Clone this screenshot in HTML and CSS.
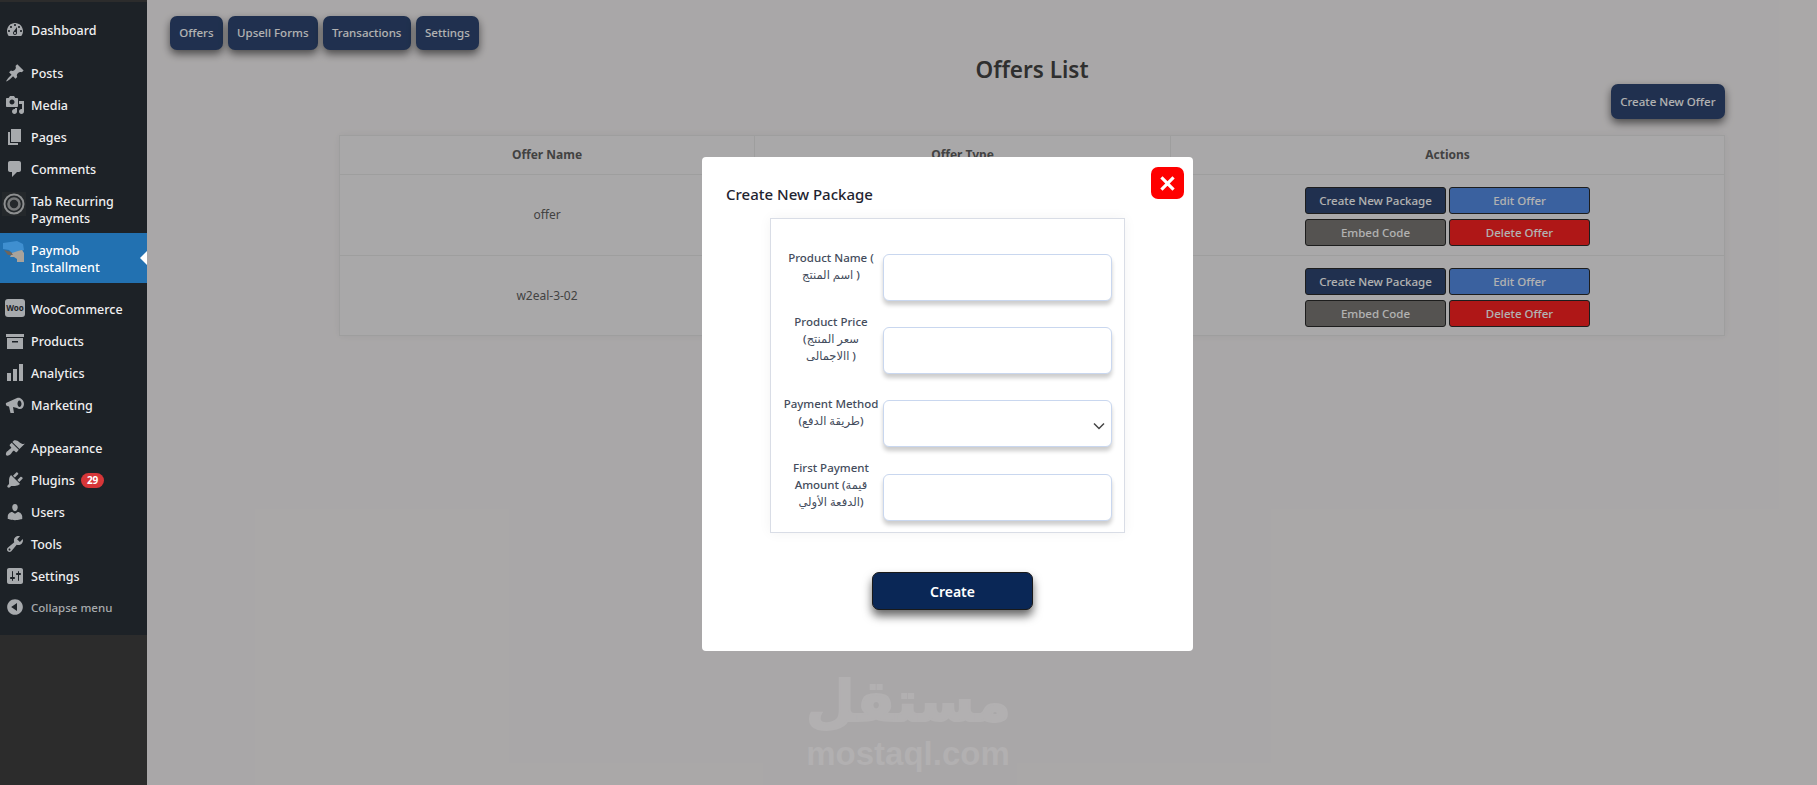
FILE: index.html
```html
<!DOCTYPE html>
<html lang="en">
<head>
  <meta charset="UTF-8">
  <title>Offers List</title>
  <link rel="stylesheet" href="styles.css">
</head>
<body>

  <nav class="sidebar">
    <ul class="menu">
      <li class="item gap-after"><svg class="icon" viewBox="0 0 20 20"><path d="M3.76 16h12.48c1.1-1.37 1.76-3.11 1.76-5 0-4.42-3.58-8-8-8s-8 3.58-8 8c0 1.89.66 3.63 1.76 5zM10 4c.55 0 1 .45 1 1s-.45 1-1 1-1-.45-1-1 .45-1 1-1zM6 6c.55 0 1 .45 1 1s-.45 1-1 1-1-.45-1-1 .45-1 1-1zm8 0c.55 0 1 .45 1 1s-.45 1-1 1-1-.45-1-1 .45-1 1-1zm-5.37 5.55L12 7v6c0 1.1-.9 2-2 2s-2-.9-2-2c0-.57.24-1.08.63-1.45zM4 10c.55 0 1 .45 1 1s-.45 1-1 1-1-.45-1-1 .45-1 1-1zm12 0c.55 0 1 .45 1 1s-.45 1-1 1-1-.45-1-1 .45-1 1-1zm-5 3c0-.55-.45-1-1-1s-1 .45-1 1 .45 1 1 1 1-.45 1-1z"/></svg><span>Dashboard</span></li>
      <li class="item"><svg class="icon" viewBox="0 0 20 20"><path d="M10.44 3.02l1.82-1.82 6.36 6.35-1.83 1.82c-1.05-.68-2.48-.57-3.41.36l-.75.75c-.92.93-1.04 2.35-.35 3.41l-1.83 1.82-2.41-2.41-2.8 2.79c-.42.42-3.38 2.71-3.8 2.29s1.86-3.39 2.28-3.81l2.79-2.79L4.1 9.36l1.83-1.82c1.05.69 2.48.57 3.4-.36l.75-.75c.93-.92 1.05-2.35.36-3.41z"/></svg><span>Posts</span></li>
      <li class="item"><svg class="icon" viewBox="0 0 20 20"><path d="M13 11V4c0-.55-.45-1-1-1h-1.67L9 1H5L3.67 3H2c-.55 0-1 .45-1 1v7c0 .55.45 1 1 1h10c.55 0 1-.45 1-1zM7 4.5c1.38 0 2.5 1.12 2.5 2.5S8.38 9.5 7 9.5 4.5 8.38 4.5 7 5.62 4.5 7 4.5zM14 6h5v10.5c0 1.38-1.12 2.5-2.5 2.5S14 17.88 14 16.5s1.12-2.5 2.5-2.5c.17 0 .34.02.5.05V9h-3V6zm-4 8.05V13h2v3.5c0 1.38-1.12 2.5-2.5 2.5S7 17.88 7 16.5 8.12 14 9.5 14c.17 0 .34.02.5.05z"/></svg><span>Media</span></li>
      <li class="item"><svg class="icon" viewBox="0 0 20 20"><path d="M6 15V2h10v13H6zm-1 1h8v2H3V5h2v11z"/></svg><span>Pages</span></li>
      <li class="item"><svg class="icon" viewBox="0 0 20 20"><path d="M5 2h9c1.1 0 2 .9 2 2v7c0 1.1-.9 2-2 2h-2l-5 5v-5H5c-1.1 0-2-.9-2-2V4c0-1.1.9-2 2-2z"/></svg><span>Comments</span></li>
      <li class="item tall"><svg class="icon icon-ring" viewBox="0 0 24 24"><rect width="24" height="24" fill="#24282b"/><circle cx="12" cy="12" r="9.5" fill="none" stroke="#8d8f90" stroke-width="2"/><circle cx="12" cy="12" r="5.5" fill="none" stroke="#77797a" stroke-width="2.6"/></svg><span>Tab Recurring Payments</span></li>
      <li class="item tall active gap-after-short"><svg class="icon icon-card" viewBox="0 0 22 22"><path fill="#3f8fd0" d="M0 2l14-2 6 3 1 6-5 2-6 2-4-4-6-1z"/><path fill="#a9a39b" d="M9 12l6-2 4-1 2 3v9h-7v-3l-3-2-4 0z"/><path fill="#6f655b" d="M1 9l7 2 2 3-5 0z"/></svg><span>Paymob Installment</span></li>
      <li class="item"><span class="icon woo-icon">Woo</span><span>WooCommerce</span></li>
      <li class="item"><svg class="icon" viewBox="0 0 20 20"><path d="M1 3h18v3H1V3zm1 4h16v11H2V7zm5 3v1.5h6V10H7z"/></svg><span>Products</span></li>
      <li class="item"><svg class="icon" viewBox="0 0 20 20"><path d="M2 10h4v8H2v-8zm6-4h4v12H8V6zm6-5h4v17h-4V1z"/></svg><span>Analytics</span></li>
      <li class="item gap-after"><svg class="icon" viewBox="0 0 20 20"><path d="M1 8l11-5c1-.5 2-.5 3 0 2 1 4 3 4 6s-2 5-4 5c-1 .2-2 0-3-1L8 12l1 6H5.500L4 11.500 2 11c-1-.5-1.500-2.200-1-3zm13.500-2.500C13 5.500 12.500 7.500 12.500 9s1 3 2 3 2-1.500 2-3-1-3.500-2-3.500z"/></svg><span>Marketing</span></li>
      <li class="item"><svg class="icon" viewBox="0 0 20 20"><path d="M14.48 11.06L7.41 3.99l1.5-1.5c.5-.56 2.3-.47 3.51.32 1.21.8 1.43 1.28 2.91 2.1 1.18.64 2.45 1.26 4.45.85zm-.71.71L6.7 4.7 4.93 6.47c-.39.39-.39 1.02 0 1.41l1.06 1.06c.39.39.39 1.03 0 1.42-.6.6-1.43 1.11-2.21 1.69-.35.26-.7.53-1.01.84C1.43 13.23.4 15.62 1.05 16.93c.65 1.31 3.14.65 4.49-.7.31-.31.58-.66.84-1.02.57-.78 1.08-1.61 1.69-2.21.39-.39 1.02-.39 1.41 0l1.06 1.06c.39.39 1.02.39 1.41 0z"/></svg><span>Appearance</span></li>
      <li class="item"><svg class="icon" viewBox="0 0 20 20"><path d="M13.11 4.36L9.87 7.6 8 5.73l3.24-3.24c.35-.34 1.05-.2 1.56.32.52.51.66 1.21.31 1.55zm-8 1.77l.91-1.12 9.01 9.01-1.19.84c-.71.71-2.63 1.16-3.82 1.16H6.14L4.9 17.26c-.59.59-1.54.59-2.12 0-.59-.58-.59-1.53 0-2.12l1.24-1.24v-3.88c0-1.13.4-3.19 1.09-3.89zm7.26 3.97l3.24-3.24c.34-.35 1.04-.21 1.55.31.52.51.66 1.21.31 1.55l-3.24 3.25z"/></svg><span>Plugins</span><span class="badge">29</span></li>
      <li class="item"><svg class="icon" viewBox="0 0 20 20"><path d="M10 9.25c-2.27 0-2.73-3.44-2.73-3.44C7 4.02 7.82 2 9.97 2c2.16 0 2.98 2.02 2.71 3.81 0 0-.41 3.44-2.68 3.44zm0 2.57L12.72 10c2.39 0 4.52 2.33 4.52 4.53v2.49s-3.65 1.13-7.24 1.13c-3.65 0-7.24-1.13-7.24-1.13v-2.49c0-2.25 1.94-4.48 4.47-4.48z"/></svg><span>Users</span></li>
      <li class="item"><svg class="icon" viewBox="0 0 20 20"><path d="M16.68 9.77c-1.34 1.34-3.3 1.67-4.95.99l-5.41 6.52c-.99.99-2.59.99-3.58 0s-.99-2.59 0-3.57l6.52-5.42c-.68-1.65-.35-3.61.99-4.95 1.28-1.28 3.12-1.62 4.72-1.06l-2.89 2.89 2.82 2.82 2.86-2.87c.53 1.58.18 3.39-1.08 4.65zM3.81 16.21c.4.39 1.04.39 1.43 0 .4-.4.4-1.04 0-1.43-.39-.4-1.03-.4-1.43 0-.39.39-.39 1.03 0 1.43z"/></svg><span>Tools</span></li>
      <li class="item"><svg class="icon" viewBox="0 0 20 20"><path d="M18 16V4c0-1.1-.9-2-2-2H4c-1.1 0-2 .9-2 2v12c0 1.1.9 2 2 2h12c1.1 0 2-.9 2-2zM8 11h1c.55 0 1 .45 1 1s-.45 1-1 1H8v1.5c0 .28-.22.5-.5.5s-.5-.22-.5-.5V13H6c-.55 0-1-.45-1-1s.45-1 1-1h1V5.5c0-.28.22-.5.5-.5s.5.22.5.5V11zm5-2h-1c-.55 0-1-.45-1-1s.45-1 1-1h1V5.500c0-.28.22-.5.5-.5s.5.22.5.5V7h1c.55 0 1 .45 1 1s-.45 1-1 1h-1v5.500c0 .28-.22.5-.5.5s-.5-.22-.5-.5V9z"/></svg><span>Settings</span></li>
      <li class="item collapse"><svg class="icon" viewBox="0 0 20 20"><path d="M10 2.160c4.330 0 7.840 3.510 7.840 7.840s-3.510 7.840-7.840 7.840S2.160 14.330 2.160 10 5.710 2.160 10 2.160zm2 11.720V6.120L6.180 9.970z"/></svg><span>Collapse menu</span></li>
    </ul>
  </nav>

  <main class="content">
    <div class="tabs">
      <a class="btn">Offers</a>
      <a class="btn">Upsell Forms</a>
      <a class="btn">Transactions</a>
      <a class="btn">Settings</a>
    </div>

    <div class="offers-wrap">
      <h1 class="page-title">Offers List</h1>

      <div class="toolbar">
        <a class="btn">Create New Offer</a>
      </div>

      <table class="offers">
        <thead>
          <tr>
            <th class="col-name">Offer Name</th>
            <th class="col-type">Offer Type</th>
            <th>Actions</th>
          </tr>
        </thead>
        <tbody>
          <tr>
            <td>offer</td>
            <td></td>
            <td class="actions-cell">
              <div class="actions">
                <a class="act act-navy">Create New Package</a>
                <a class="act act-blue">Edit Offer</a>
                <a class="act act-grey">Embed Code</a>
                <a class="act act-red">Delete Offer</a>
              </div>
            </td>
          </tr>
          <tr>
            <td>w2eal-3-02</td>
            <td></td>
            <td class="actions-cell">
              <div class="actions">
                <a class="act act-navy">Create New Package</a>
                <a class="act act-blue">Edit Offer</a>
                <a class="act act-grey">Embed Code</a>
                <a class="act act-red">Delete Offer</a>
              </div>
            </td>
          </tr>
        </tbody>
      </table>
    </div>
  </main>

  <div class="overlay">
    <div class="modal">
      <button class="close" type="button"><svg viewBox="0 0 14 14"><path d="M2 2l10 10M12 2L2 12"/></svg></button>
      <h2 class="modal-title">Create New Package</h2>

      <form class="package-form">
        <label class="lbl">Product Name (<br>اسم المنتج )</label>
        <input class="field" type="text">

        <label class="lbl lbl-tall">Product Price<br>(سعر المنتج<br>االاجمالى )</label>
        <input class="field" type="text">

        <label class="lbl">Payment Method<br>(طريقة الدفع)</label>
        <div class="select-wrap">
          <select class="field"></select>
          <svg class="chevron" viewBox="0 0 12 8"><path d="M1 1.500l5 5 5-5"/></svg>
        </div>

        <label class="lbl lbl-tall">First Payment<br>Amount (قيمة<br>الدفعة الأولي)</label>
        <input class="field field-last" type="text">
      </form>

      <div class="create-row">
        <button class="create" type="button">Create</button>
      </div>
    </div>

    <div class="watermark">
      <div class="wm-ar" lang="ar">مستقل</div>
      <div class="wm-en">mostaql.com</div>
    </div>
  </div>

</body>
</html>
```

FILE: styles.css
```css
* {
  box-sizing: border-box;
}
html, body {
  margin: 0;
  height: 785px;
  overflow: hidden;
}
body {
  font-family: "Noto Sans", "DejaVu Sans", sans-serif;
  background: #f3f0f1;
  color: #5f5f5f;
  font-size: 13px;
}

/* sidebar */
.sidebar {
  position: absolute;
  top: 0;
  left: 0;
  bottom: 0;
  z-index: 3;
  width: 147px;
  padding-top: 2px;
  background: #2c2c2c;
}
.menu {
  list-style: none;
  margin: 0;
  padding: 12px 0;
  height: 633px;
  background: #1d2227;
}
.item {
  position: relative;
  display: flex;
  align-items: center;
  height: 32px;
  padding-left: 31px;
  color: #f0f0f1;
  font-size: 12.5px;
  font-weight: 500;
  line-height: 17px;
}
.gap-after {
  margin-bottom: 11px;
}
.gap-after-short {
  margin-bottom: 10px;
}
.tall {
  height: 48px;
  padding-top: 1px;
}
.active {
  height: 50px;
  background: #2271b1;
  color: #fff;
}
.active::after {
  content: "";
  position: absolute;
  right: 0;
  top: 18px;
  border: 7px solid transparent;
  border-left-width: 0;
  border-right-color: #fff;
}
.icon {
  position: absolute;
  left: 5px;
  top: 6px;
  width: 20px;
  height: 20px;
  fill: #a7aaad;
}
.icon-ring {
  left: 2px;
  top: 7px;
  width: 24px;
  height: 24px;
}
.icon-card {
  left: 3px;
  top: 8px;
  width: 22px;
  height: 22px;
}
.woo-icon {
  left: 5px;
  top: 6px;
  height: 18px;
  border-radius: 3px;
  background: #a7aaad;
  color: #1d2227;
  font-size: 8px;
  font-weight: 700;
  line-height: 18px;
  text-align: center;
}
.badge {
  margin-left: 6px;
  padding: 0 6px;
  border-radius: 9px;
  background: #d63638;
  color: #fff;
  font-size: 10px;
  font-weight: 700;
  line-height: 15px;
}
.collapse {
  margin-top: -1px;
  color: #a7aaad;
  font-size: 11.5px;
}

/* main page */
.content {
  margin-left: 147px;
  padding: 16px 0 0 23px;
}
.tabs {
  display: flex;
  gap: 5px;
}
.btn {
  display: block;
  padding: 0 9.25px;
  border-radius: 7px;
  background: #2e4671;
  box-shadow: 0 4px 8px rgba(0, 0, 0, 0.55);
  color: #fff;
  font-size: 11.5px;
  font-weight: 500;
  line-height: 34px;
}
.offers-wrap {
  width: 1386px;
  margin-left: 169px;
}
.page-title {
  margin: 0;
  padding-top: 4px;
  color: #444;
  font-size: 22.5px;
  font-weight: 600;
  line-height: 32px;
  text-align: center;
}
.toolbar {
  display: flex;
  justify-content: flex-end;
  margin-top: -2px;
}
.toolbar .btn {
  padding: 0 9.5px;
  line-height: 35px;
}
.offers {
  width: 1386px;
  margin-top: 16px;
  border-collapse: collapse;
  border: 1px solid #e2e2e2;
  box-shadow: 0 0 8px rgba(0, 0, 0, 0.06);
  background: #f3f1f2;
  font-size: 12px;
  table-layout: fixed;
}
.col-name {
  width: 415px;
}
.col-type {
  width: 416px;
}
.offers th {
  height: 39px;
  padding: 0 0 1px;
  border-bottom: 1px solid #e2e2e2;
  border-right: 1px solid #e2e2e2;
  font-weight: 700;
  font-size: 12px;
}
.offers td {
  height: 80.5px;
  padding: 0;
  border-bottom: 1px solid #e2e2e2;
  border-right: 1px solid #e2e2e2;
  text-align: center;
}
.offers td.actions-cell {
  padding-top: 4px;
}
.actions {
  display: grid;
  grid-template-columns: 141px 141px;
  gap: 5px 3px;
  justify-content: center;
}
.act {
  display: block;
  height: 27px;
  border: 1px solid #2a2a2a;
  border-radius: 3px;
  color: #fff;
  font-size: 11.5px;
  font-weight: 500;
  line-height: 25px;
  text-align: center;
}
.act-navy {
  background: #2e4671;
}
.act-blue {
  background: #548ce4;
}
.act-grey {
  background: #7a7774;
}
.act-red {
  background: #fb2121;
}

/* modal on top of the page */
.overlay {
  position: absolute;
  top: 0;
  left: 147px;
  right: 0;
  bottom: 0;
  z-index: 2;
  padding: 157px 0 0 555px;
  background: rgba(0, 0, 0, 0.3);
}
.modal {
  position: relative;
  width: 491px;
  height: 494px;
  padding: 26px 0 0 24px;
  border-radius: 4px;
  background: #fff;
}
.close {
  position: absolute;
  top: 10px;
  right: 9px;
  width: 33px;
  height: 32px;
  padding: 8px;
  border: none;
  border-radius: 7px;
  background: #f00;
}
.close svg {
  display: block;
  fill: none;
  stroke: #fff;
  stroke-width: 2.600;
}
.modal-title {
  margin: 0;
  color: #1f2430;
  font-size: 15px;
  font-weight: 500;
  line-height: 22px;
}
.package-form {
  display: grid;
  grid-template-columns: 100px 229px;
  grid-auto-rows: 47px;
  gap: 26px 2px;
  align-items: start;
  width: 355px;
  height: 315px;
  margin: 13px 0 0 44px;
  padding: 35px 0 0 10px;
  border: 1px solid #d9dde6;
  box-shadow: 0 0 12px rgba(0, 0, 0, 0.05);
}
.lbl {
  margin-top: -5px;
  color: #444c5c;
  font-size: 11.5px;
  font-weight: 500;
  line-height: 17px;
  text-align: center;
  white-space: nowrap;
}
.lbl-tall {
  margin-top: -14px;
}
.field {
  display: block;
  width: 229px;
  height: 47px;
  border: 1px solid #c9d7ef;
  border-radius: 6px;
  background: #fff;
  box-shadow: 0 4px 4px rgba(0, 0, 0, 0.2);
  appearance: none;
}
.field-last {
  margin-top: 1px;
}
.select-wrap {
  position: relative;
}
.chevron {
  position: absolute;
  right: 7px;
  top: 22px;
  width: 12px;
  height: 8px;
  fill: none;
  stroke: #444;
  stroke-width: 1.500;
}
.create-row {
  padding: 39px 0 0 146px;
}
.create {
  display: block;
  width: 161px;
  height: 38px;
  border: 1px solid #1a1a1a;
  border-radius: 7px;
  background: #0a2756;
  box-shadow: 0 6px 10px rgba(0, 0, 0, 0.6);
  color: #fff;
  font-family: inherit;
  font-size: 14px;
  font-weight: 600;
}

/* site watermark */
.watermark {
  position: absolute;
  left: 659px;
  top: 668px;
  width: 204px;
  color: #b2b0b1;
  text-align: center;
}
.wm-ar {
  font-family: "DejaVu Sans", sans-serif;
  font-size: 56px;
  font-weight: 700;
  line-height: 67px;
  white-space: nowrap;
  -webkit-text-stroke: 2px #b2b0b1;
}
.wm-en {
  font-family: "Liberation Sans", sans-serif;
  font-size: 33px;
  font-weight: 700;
  line-height: 38px;
  white-space: nowrap;
}
```
